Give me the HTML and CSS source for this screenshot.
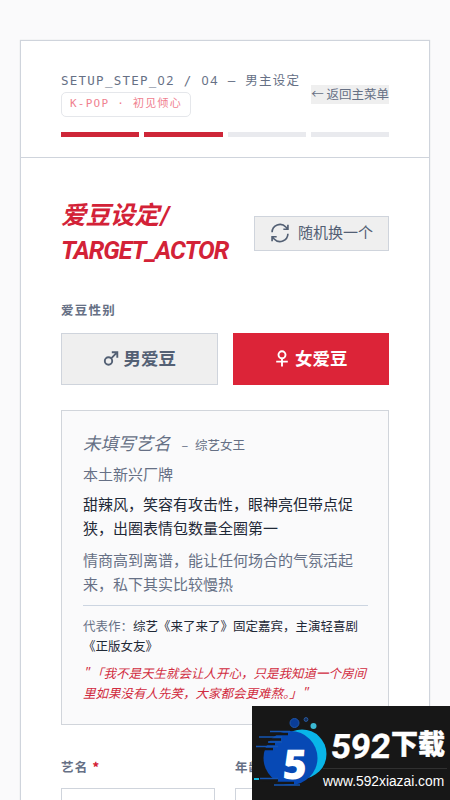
FILE: index.html
```html
<!DOCTYPE html>
<html lang="zh-CN">
<head>
<meta charset="utf-8">
<meta name="viewport" content="width=device-width, initial-scale=1">
<title>爱豆设定</title>
<link rel="stylesheet" href="styles.css">
</head>
<body>
<main class="panel">
  <header class="head">
    <div class="head-row">
      <div class="crumbs">
        <div class="step">SETUP_STEP_<span class="num">02</span> / <span class="num">04</span> <span class="dash">–</span> 男主设定</div>
        <div class="tag">K-POP · 初见倾心</div>
      </div>
      <button class="back">← 返回主菜单</button>
    </div>
    <div class="progress"><i class="on"></i><i class="on"></i><i></i><i></i></div>
  </header>
  <section class="content">
    <div class="title-row">
      <h1>爱豆设定<span class="slash">/</span><br><span class="latin">TARGET_ACTOR</span></h1>
      <button class="shuffle">
        <svg width="20" height="20" viewBox="0 0 24 24" fill="none" stroke="currentColor" stroke-width="2"><path d="M2.500 11a9.500 9.500 0 0 1 16.500-6.200L21.500 7.200M21.500 2v5.500H16M21.500 13a9.500 9.500 0 0 1-16.500 6.200L2.500 16.800M2.500 22v-5.500H8"/></svg>
        <span>随机换一个</span>
      </button>
    </div>
    <div class="label">爱豆性别</div>
    <div class="genders">
      <button class="gender">
        <svg width="16" height="17" viewBox="0 0 16 17" fill="none" stroke="currentColor" stroke-width="1.900"><circle cx="5.500" cy="11" r="3.700"/><path d="M8.200 8.300 13.600 2.900M8.800 2.200h5.500v5.500"/></svg>
        <span>男爱豆</span>
      </button>
      <button class="gender active">
        <svg width="16" height="17" viewBox="0 0 16 17" fill="none" stroke="currentColor" stroke-width="1.900"><circle cx="8" cy="4.800" r="3.500"/><path d="M8 8.300v8.200M2.200 11.600h11.600"/></svg>
        <span>女爱豆</span>
      </button>
    </div>
    <article class="profile">
      <div class="name"><em>未填写艺名</em><span>– 综艺女王</span></div>
      <p class="agency">本土新兴厂牌</p>
      <p class="look">甜辣风，笑容有攻击性，眼神亮但带点促<br>狭，出圈表情包数量全圈第一</p>
      <p class="nature">情商高到离谱，能让任何场合的气氛活起<br>来，私下其实比较慢热</p>
      <p class="works"><span>代表作：</span>综艺《来了来了》固定嘉宾，主演轻喜剧<br>《正版女友》</p>
      <p class="quote"><q>"</q>「我不是天生就会让人开心，只是我知道一个房间<br>里如果没有人先笑，大家都会更难熬。」<q>"</q></p>
    </article>
    <div class="fields">
      <label class="label">艺名 <b>*</b><input></label>
      <label class="label">年龄<input></label>
    </div>
  </section>
</main>
<aside class="watermark">
  <svg class="mark" width="78" height="88" viewBox="0 0 78 88">
    <circle cx="50" cy="48" r="24.500" fill="#09b5e8"/>
    <circle cx="38.500" cy="52" r="27" fill="#0749b5"/>
    <circle cx="42.500" cy="17" r="4.500" fill="#0a3d98" stroke="#1f55a8"/>
    <circle cx="54" cy="13.500" r="1.900" fill="#152e58" stroke="#28599f"/>
    <circle cx="61.500" cy="20" r="3" fill="#3bb9d3"/>
    <path d="M14 28h22M14 33.500h15M9 38h14M6 43h15M10 74h16M20 77h22" stroke="#171717" stroke-width="2.500"/>
    <path d="M18 25.500h20M7 31h23M16 36h14M4 40.500h22M8 72.500h18M22 79h26" stroke="#1555b2" stroke-width="1.400"/>
    <path d="M2 73h5" stroke="#12b9df" stroke-width="2"/>
  </svg>
  <div class="five">5</div>
  <div class="brand">
    <strong><span class="digits">592</span><span>下载</span></strong>
    <small>www.592xiazai.com</small>
  </div>
</aside>
</body>
</html>
```
FILE: styles.css
```css
* { box-sizing: border-box; }
html, body { height: 800px; overflow: hidden; }
body {
  margin: 0;
  padding: 40px 20px 0;
  background: #fafafb;
  color: #1f2937;
  font-family: "Noto Sans CJK SC", sans-serif;
}
button { border: 0; border-radius: 0; padding: 0; background: #efefef; color: #536074; font-family: inherit; }
p, h1 { margin: 0; }
.panel { height: 760px; overflow: hidden; border: 1px solid #cfd4dc; border-bottom: 0; background: #fff; box-shadow: 0 0 1px #d1d5db; }
.head { height: 117px; padding: 27px 40px 0; border-bottom: 1px solid #cfd4dc; }
.head-row { display: flex; justify-content: space-between; align-items: center; height: 49px; }
.crumbs { width: 242px; white-space: nowrap; }
.step, .tag { font-family: "DejaVu Sans Mono", "Noto Sans CJK SC", monospace; }
.step { height: 23px; line-height: 23px; font-size: 12.5px; letter-spacing: 1.25px; color: #667085; }
.num { font-family: "Noto Sans", sans-serif; letter-spacing: 1.6px; }
.tag {
  width: 130px; height: 25px; padding-left: 8px;
  border: 1px solid #e5e7eb; border-radius: 5px;
  font-size: 11px; line-height: 22px; letter-spacing: 1.25px; color: #f0818f;
}
.back { height: 19px; margin-top: 3px; font-size: 12.5px; line-height: 15px; padding-bottom: 2px; white-space: nowrap; color: #667085; }
.progress { display: grid; grid-template-columns: repeat(4, 1fr); gap: 5px; margin-top: 15px; }
.progress i { height: 5px; background: #e9eaee; }
.progress .on { background: #ce2638; }
.content { padding: 40px 40px 0; }
.title-row { display: flex; justify-content: space-between; align-items: center; height: 70px; }
h1 { font: italic bold 25px/35px Roboto, "Noto Sans CJK SC", sans-serif; letter-spacing: -.6px; color: #d32237; white-space: nowrap; }
.latin { letter-spacing: -1.1px; }
.slash { margin-left: 2px; }
.shuffle { display: flex; align-items: center; justify-content: center; gap: 8px; width: 135px; height: 35px; border: 1px solid #cfd4dc; font-size: 15px; line-height: 20px; }
.shuffle span { margin-top: -2px; }
.label { display: block; font-size: 12.5px; font-weight: 700; line-height: 20px; letter-spacing: 1.25px; color: #667085; }
.content > .label { margin-top: 32px; }
.genders { display: grid; grid-template-columns: 1fr 1fr; gap: 15px; margin-top: 13px; }
.gender { display: flex; align-items: center; justify-content: center; gap: 5px; height: 52px; border: 1px solid #cfd4dc; font-size: 17.5px; font-weight: 700; }
.gender span { margin-top: -3px; }
.gender svg { margin-top: -2px; }
.gender.active { background: #dc2438; border-color: #dc2438; color: #fff; }
.profile { height: 315px; margin-top: 25px; padding: 19px 20px 20px 21px; border: 1px solid #d1d5db; background: #fafafb; white-space: nowrap; }
.name { display: flex; align-items: baseline; gap: 11px; height: 27px; line-height: 25px; color: #667085; }
.name em { font-size: 17.5px; }
.name span { font-size: 12.5px; word-spacing: 4px; }
.agency { margin-top: 4px; font-size: 15px; line-height: 25px; color: #667085; }
.look, .nature { font-size: 15px; line-height: 24.4px; }
.look { margin-top: 6px; }
.nature { margin-top: 7px; color: #667085; }
.works { margin-top: 8px; padding-top: 10px; border-top: 1px solid #ccd5e1; font-size: 12.5px; line-height: 20px; }
.works span { color: #667085; }
.quote { margin-top: 7px; font-size: 12.5px; line-height: 20px; font-style: italic; color: #d12c40; }
.quote q { quotes: none; letter-spacing: 2px; }
.fields { display: grid; grid-template-columns: 154px 154px; gap: 20px; margin-top: 32px; }
.fields b { color: #d32237; }
.fields input { display: block; width: 100%; height: 50px; margin-top: 11px; border: 1px solid #cfd4dc; border-radius: 0; background: #fff; }
.watermark { position: absolute; left: 252px; top: 706px; width: 198px; height: 94px; background: #171717; color: #fff; }
.mark { position: absolute; left: 0; top: 0; }
.five { position: absolute; left: 31px; top: 35px; font: 900 41px/44px "Open Sans", sans-serif; transform: skewX(-4deg); transform-origin: center; }
.brand { position: absolute; left: 71px; top: 20px; width: 124px; }
.brand strong { display: flex; gap: 0; height: 43px; padding-left: 8px; border-bottom: 1px solid #303030; font-size: 27px; font-weight: 900; line-height: 34px; white-space: nowrap; -webkit-text-stroke: .4px #fff; }
.digits { width: 60px; font: 700 35px/41px Roboto, sans-serif; letter-spacing: -.3px; transform: skewX(-5deg) scaleY(.96); }
.brand small { display: block; font: 13.8px/25px "Liberation Sans", sans-serif; white-space: nowrap; }
```
